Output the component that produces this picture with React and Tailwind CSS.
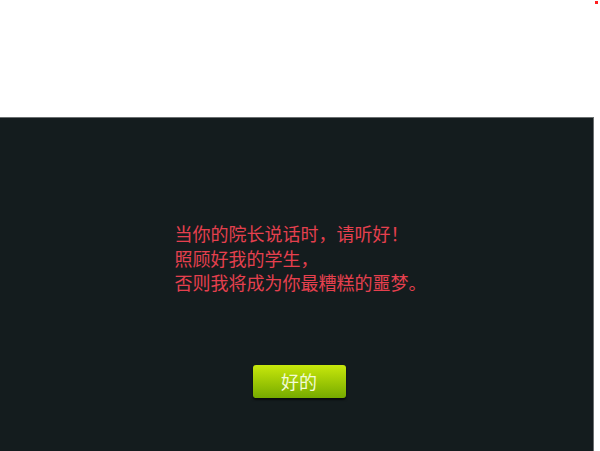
export default function App() {
  return (
    <div className="relative h-[451px] w-[600px] bg-white font-['Noto_Sans_CJK_SC',sans-serif]">
      <span className="absolute right-[2px] top-[1px] h-[3px] w-[3px] bg-[#ff1e1e]" />
      <div className="h-[117px]" />
      <div className="flex h-[334px] w-[594px] flex-col items-center border-r border-t border-[#6b6f70] bg-[#141c1e]">
        <div className="mt-[103px] w-[246px] whitespace-nowrap pl-[1px] text-[18px] leading-[24.5px] text-[#e5404e]">
          <p>当你的院长说话时，请听好！</p>
          <p>照顾好我的学生，</p>
          <p>否则我将成为你最糟糕的噩梦。</p>
        </div>
        <button className="mt-[70px] ml-[5px] flex h-[33px] w-[93px] items-center justify-center rounded-[3px] bg-gradient-to-b from-[#c8e80c] to-[#76ab00] text-[18px] text-[#f2fbd6] shadow-[0_2px_2px_rgba(0,0,0,0.6)]">
          好的
        </button>
      </div>
    </div>
  );
}
